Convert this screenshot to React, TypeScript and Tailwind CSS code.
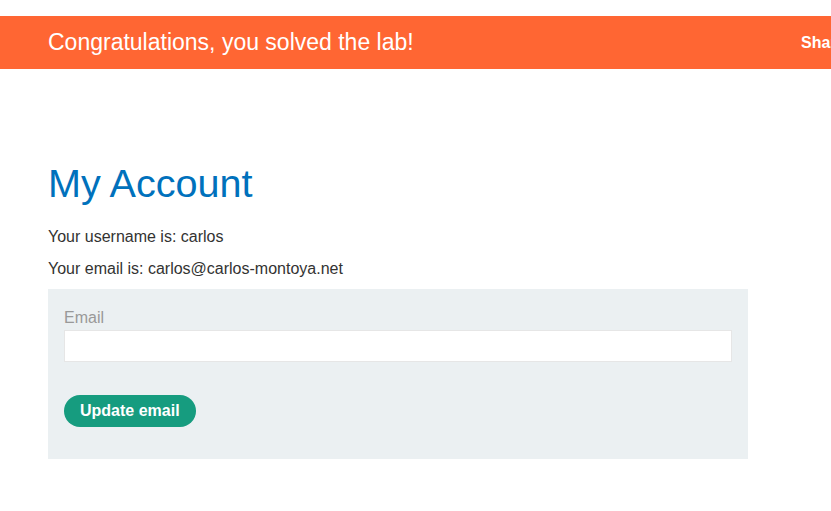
export default function App() {
  return (
    <div className="w-[831px] h-[511px] overflow-hidden bg-white font-['Liberation_Sans',Arial,sans-serif]">
      {/* BANNER */}
      <div className="mt-4 h-[53px] bg-[#ff6633] flex items-center pl-12 text-white">
        <div className="w-[753px] shrink-0 text-[23px] leading-none">
          Congratulations, you solved the lab!
        </div>
        <div className="shrink-0 whitespace-nowrap text-base font-bold leading-none">
          Share your skills!
        </div>
      </div>

      {/* CONTENT */}
      <div className="px-12 pt-[90px]">
        <h1 className="text-[39.6px] leading-[48px] text-[#0071bc]">My Account</h1>
        <p className="mt-[18px] text-base leading-6 text-[#333332]">Your username is: carlos</p>
        <p className="mt-2 text-base leading-6 text-[#333332]">Your email is: carlos@carlos-montoya.net</p>

        <form className="mt-2 w-[700px] bg-[#ebf0f2] px-4 pt-[17px] pb-8">
          <label className="block text-base leading-6 text-[#999]">Email</label>
          <input
            type="email"
            className="block w-full h-8 bg-white border border-[#e6e6e6] outline-none"
          />
          <button
            type="button"
            className="mt-[33px] h-8 px-4 rounded-full bg-[#169c7f] text-white font-bold text-base"
          >
            Update email
          </button>
        </form>
      </div>
    </div>
  );
}
